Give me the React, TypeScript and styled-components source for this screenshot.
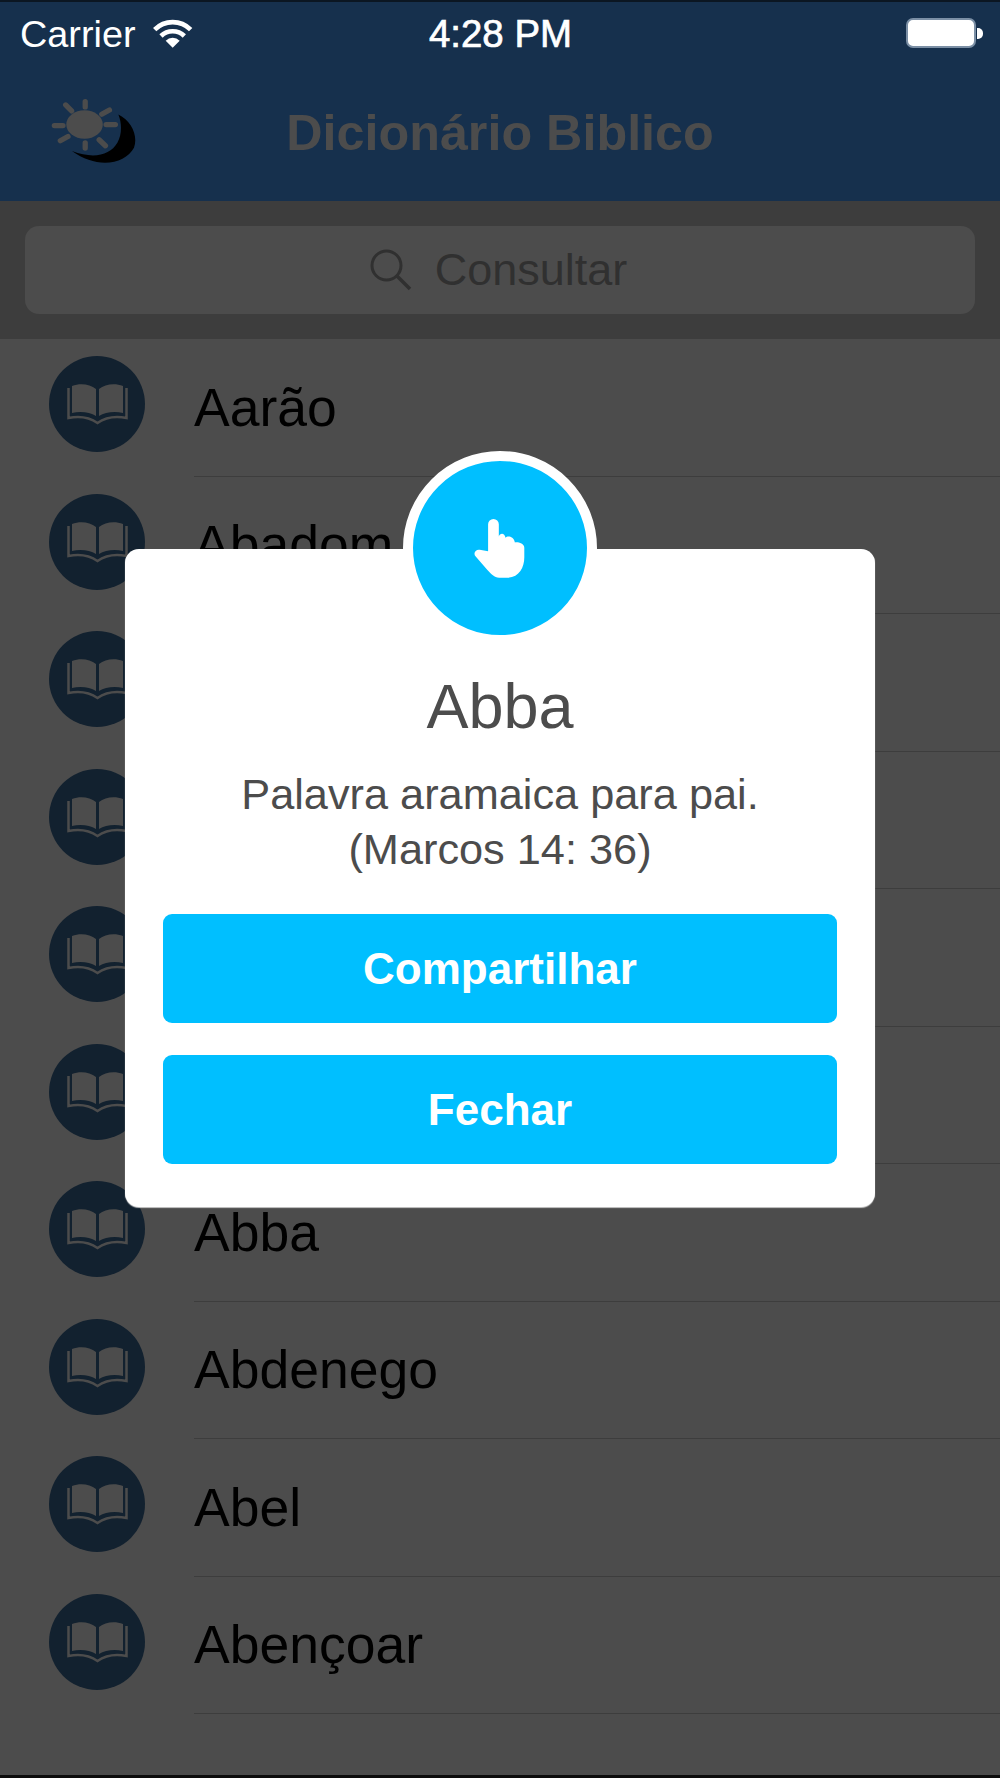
import React from 'react';
import styled, { createGlobalStyle } from 'styled-components';

const Global = createGlobalStyle`
  html, body { margin: 0; padding: 0; background: #4c4c4c; }
  body { font-family: "Liberation Sans", Arial, sans-serif; }
  * { box-sizing: border-box; }
`;

const Screen = styled.div`
  position: relative;
  width: 1000px;
  height: 1778px;
  overflow: hidden;
  display: flex;
  flex-direction: column;
  background: #4c4c4c;
  border-top: 2px solid #0b1622;
  border-bottom: 3px solid #0c0c0c;
`;

const Header = styled.header`
  height: 199px;
  background: #16304d;
  display: flex;
  flex-direction: column;
`;

const StatusBar = styled.div`
  height: 64px;
  padding: 0 17px 0 20px;
  display: grid;
  grid-template-columns: 1fr auto 1fr;
  align-items: center;
  color: #fff;
`;

const Carrier = styled.div`
  display: flex;
  align-items: center;
  gap: 17px;
  font-size: 37.8px;
`;

const Clock = styled.div`
  margin-left: -2px;
  font-size: 38.4px;
  font-weight: 400;
  -webkit-text-stroke: 0.7px #fff;
`;

const BatteryWrap = styled.div`
  justify-self: end;
  display: flex;
  align-items: center;
  gap: 1px;
  margin-bottom: 2px;
`;

const BatteryBody = styled.div`
  width: 70px;
  height: 30px;
  background: #fff;
  border: 2px solid #7b8fa5;
  border-radius: 7px;
`;

const BatteryNub = styled.div`
  width: 6px;
  height: 11px;
  background: #fff;
  border-radius: 0 5px 5px 0;
`;

const NavBar = styled.div`
  flex: 1;
  padding-bottom: 3px;
  display: grid;
  grid-template-columns: 1fr auto 1fr;
  align-items: center;
`;

const NavIconSlot = styled.div`
  padding-left: 50px;
  display: flex;
`;

const NavTitle = styled.h1`
  margin: 0;
  font-size: 50.3px;
  font-weight: 700;
  color: #4c4c4c;
`;

const SearchBand = styled.div`
  height: 138px;
  padding: 25px;
  background: #3d3d3d;
`;

const SearchField = styled.div`
  height: 88px;
  padding-right: 3px;
  border-radius: 14px;
  background: #4c4c4c;
  display: flex;
  align-items: center;
  justify-content: center;
  gap: 23px;
  font-size: 45px;
  color: #303030;
`;

const List = styled.ul`
  margin: 0;
  padding: 0;
  list-style: none;
`;

const Row = styled.li`
  height: 137.5px;
  padding-left: 49px;
  display: flex;
`;

const Badge = styled.div`
  flex: none;
  width: 96px;
  height: 96px;
  margin: 17px 49px 0 0;
  border-radius: 50%;
  background: #12212f;
`;

const RowLabel = styled.div`
  flex: 1;
  display: flex;
  align-items: center;
  font-size: 53.5px;
  color: #000;
  border-bottom: 1.5px solid #3d3d3d;
`;

const Overlay = styled.div`
  position: absolute;
  inset: 0;
  display: flex;
  align-items: center;
  justify-content: center;
  padding-bottom: 21px;
`;

const Card = styled.div`
  position: relative;
  width: 750px;
  height: 658px;
  padding: 120px 38px 0;
  border-radius: 14px;
  background: #fff;
  text-align: center;
  box-shadow: 0 1px 1px rgba(215, 215, 215, 0.9);
`;

const Medal = styled.div`
  position: absolute;
  left: 50%;
  top: -98px;
  width: 194px;
  height: 194px;
  margin-left: -97px;
  border: 10px solid #fff;
  border-radius: 50%;
  background: #00bfff;
  display: flex;
  align-items: center;
  justify-content: center;
`;

const CardTitle = styled.h2`
  margin: 0;
  font-size: 63px;
  line-height: 74px;
  font-weight: 400;
  color: #4c4c4c;
`;

const CardBody = styled.p`
  margin: 24px 0 37px;
  font-size: 43.3px;
  line-height: 55px;
  color: #4c4c4c;
`;

const ActionStack = styled.div`
  display: flex;
  flex-direction: column;
  gap: 32px;
`;

const Action = styled.button`
  height: 109px;
  border: 0;
  padding: 0;
  border-radius: 9px;
  background: #00bfff;
  color: #fff;
  font-family: inherit;
  font-size: 44px;
  font-weight: 700;
`;

const WifiIcon = () => (
  <svg width="40" height="30" viewBox="458 52 120 90" fill="none" stroke="#fff" strokeWidth="14">
    <path d="M463 84A76 76 0 0 1 571 84" />
    <path d="M482 103A50 50 0 0 1 552 103" />
    <path d="M517 138L496 117A30 30 0 0 1 538 117Z" fill="#fff" stroke="none" />
  </svg>
);

const SunMoonIcon = () => (
  <svg width="87" height="68" viewBox="150 295 260 205">
    <path
      d="M355 345C395 365 415 410 402 445C375 495 290 510 215 455C280 480 330 468 352 430C366 405 366 372 355 345Z"
      fill="#000"
    />
    <ellipse cx="253" cy="375" rx="55" ry="43" fill="#4c4c4c" />
    <g stroke="#4c4c4c" strokeWidth="16" strokeLinecap="round">
      <path d="M255 306V322M196 316L214 334M328 331L305 344M318 375H346M162 378H188M180 424L203 411M255 430V446M297 421L316 439" />
    </g>
  </svg>
);

const SearchIcon = () => (
  <svg width="42" height="42" viewBox="0 0 42 42" fill="none" stroke="#303030" strokeWidth="3">
    <circle cx="16.5" cy="16.5" r="14.5" />
    <path d="M27 27L40 40" strokeWidth="3.5" />
  </svg>
);

const BookIcon = () => (
  <svg width="96" height="96" viewBox="0 0 96 96">
    <path d="M23 30C31 27 41 28 47 33V60C41 56 31 55 23 57Z" fill="#4c4c4c" />
    <path d="M50 33C56 28 66 27 74 30V57C66 55 56 56 50 60Z" fill="#4c4c4c" />
    <path
      d="M19.5 32V62C30 60 40 61 48.5 67C57 61 67 60 77.5 62V32"
      fill="none"
      stroke="#4c4c4c"
      strokeWidth="2.5"
    />
  </svg>
);

const HandIcon = () => (
  <svg width="52" height="62" viewBox="285 260 155 185">
    <path
      d="M327 282A16 16 0 0 1 359 282V318C362 308 376 306 379 322C384 316 402 316 407 336C412 334 435 336 435 352V380C435 410 420 440 385 441H360C345 441 337 430 325 418L290 378C281 368 290 356 302 358L327 362Z"
      fill="#fff"
    />
  </svg>
);

const words = ['Aarão', 'Abadom', 'Abana', 'Abarim', 'Abate', 'Abater', 'Abba', 'Abdenego', 'Abel', 'Abençoar'];

export default function App() {
  return (
    <Screen>
      <Global />
      <Header>
        <StatusBar>
          <Carrier>
            Carrier
            <WifiIcon />
          </Carrier>
          <Clock>4:28 PM</Clock>
          <BatteryWrap>
            <BatteryBody />
            <BatteryNub />
          </BatteryWrap>
        </StatusBar>
        <NavBar>
          <NavIconSlot>
            <SunMoonIcon />
          </NavIconSlot>
          <NavTitle>Dicionário Biblico</NavTitle>
        </NavBar>
      </Header>
      <SearchBand>
        <SearchField>
          <SearchIcon />
          Consultar
        </SearchField>
      </SearchBand>
      <List>
        {words.map((w) => (
          <Row key={w}>
            <Badge>
              <BookIcon />
            </Badge>
            <RowLabel>{w}</RowLabel>
          </Row>
        ))}
      </List>
      <Overlay>
        <Card>
          <Medal>
            <HandIcon />
          </Medal>
          <CardTitle>Abba</CardTitle>
          <CardBody>
            Palavra aramaica para pai.
            <br />
            (Marcos 14: 36)
          </CardBody>
          <ActionStack>
            <Action>Compartilhar</Action>
            <Action>Fechar</Action>
          </ActionStack>
        </Card>
      </Overlay>
    </Screen>
  );
}
